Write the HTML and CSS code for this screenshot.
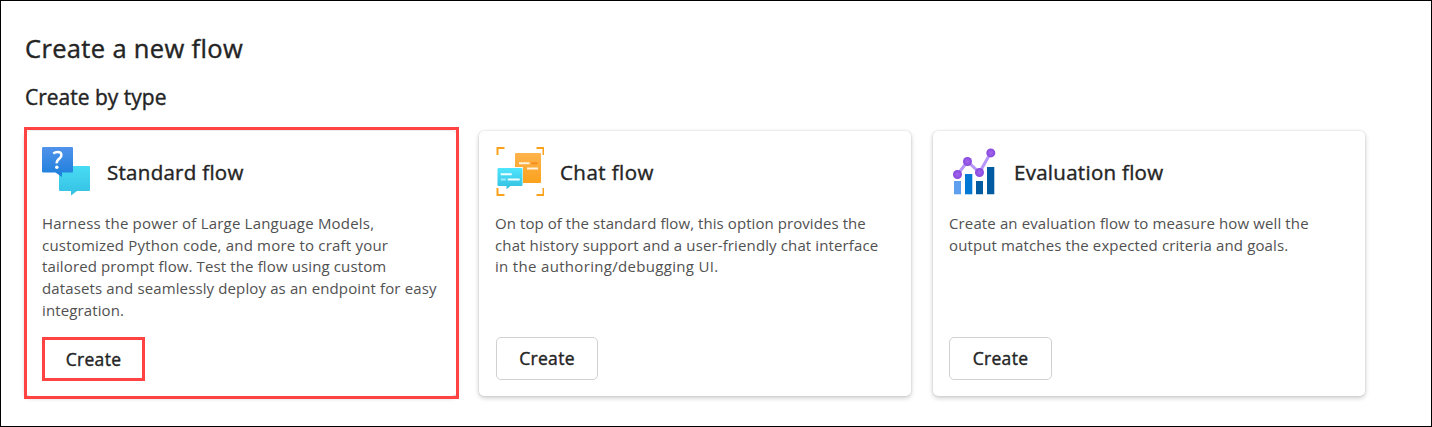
FILE: index.html
```html
<!DOCTYPE html>
<html lang="en">
<head>
<meta charset="utf-8">
<title>Create a new flow</title>
<link rel="stylesheet" href="styles.css">
</head>
<body>
<main class="page">
  <h1 class="title">Create a new flow</h1>
  <h2 class="subtitle">Create by type</h2>
  <div class="cards">
    <section class="card highlighted">
      <header class="card-head">
        <svg class="icon" viewBox="0 0 49 49">
          <defs>
            <linearGradient id="blue" x1="0" y1="0" x2="0" y2="1"><stop offset="0" stop-color="#5092ea"/><stop offset="1" stop-color="#1b7fdb"/></linearGradient>
            <linearGradient id="cyan" x1="0" y1="0" x2="0" y2="1"><stop offset="0" stop-color="#48dcf4"/><stop offset="1" stop-color="#35c0e3"/></linearGradient>
          </defs>
          <path fill="url(#cyan)" d="M18 19h29q1 0 1 1v23q0 1-1 1H35l-6 4.500v-4.500H18q-1 0-1-1V20q0-1 1-1z"/>
          <path fill="url(#blue)" d="M1.500 0h28.500q1 0 1 1v23.500q0 1-1 1H20v4.500l-6.500-4.500h-12q-1.500 0-1.500-1V1q0-1 1.500-1z"/>
          <path fill="none" stroke="#fff" stroke-width="2.500" d="M11.300 6.500q2-1.500 4.200-1.500c5 0 4.600 4.300 2.200 6.200-1.700 1.300-3.100 2.200-3 5.200"/>
          <circle cx="14.800" cy="20.200" r="1.750" fill="#fff"/>
        </svg>
        <h3 class="card-title">Standard flow</h3>
      </header>
      <p class="text"><span class="wide">Harness the power of Large Language Models,</span><br><span class="wide">customized Python code, and more to craft your</span><br>tailored prompt flow. Test the flow using custom<br>datasets and seamlessly deploy as an endpoint for easy<br>integration.</p>
      <button class="create">Create</button>
    </section>
    <section class="card chat">
      <header class="card-head">
        <svg class="icon" viewBox="0 0 49 49">
          <defs>
            <linearGradient id="orange" x1="0" y1="0" x2="0" y2="1"><stop offset="0" stop-color="#ffb34d"/><stop offset="1" stop-color="#faa21d"/></linearGradient>
            <linearGradient id="aqua" x1="0" y1="0" x2="0" y2="1"><stop offset="0" stop-color="#50e6ff"/><stop offset="1" stop-color="#32bedd"/></linearGradient>
          </defs>
          <path fill="none" stroke="#faa21d" stroke-width="2" d="M2.500 8V1h7M41.500 1h7v7M48.500 41v7h-7M9.500 48h-7v-7"/>
          <path fill="url(#orange)" d="M21 6h24q1 0 1 1v28q0 1-1 1H20V7q0-1 1-1z"/>
          <path stroke="#fff2df" stroke-width="2" d="M24 16.300h10.500M32 21.500h11"/>
          <path stroke="#f78d1e" stroke-width="2" d="M36.500 16.300h6"/>
          <path fill="#fff" d="M2.500 20H28v19H2.500z"/>
          <path fill="url(#aqua)" d="M3.500 21h23q1 0 1 1v16q0 1-1 1h-11l-4 3.300V39h-8q-1 0-1-1V22q0-1 1-1z"/>
          <path stroke="#f2feff" stroke-width="2" d="M5.700 27.300h11M12.700 32.500h12"/>
          <path stroke="#9cebff" stroke-width="2" d="M5.700 32.500h5"/>
        </svg>
        <h3 class="card-title">Chat flow</h3>
      </header>
      <p class="text"><span class="snug">On top of the standard flow, this option provides the</span><br>chat history support and a user-friendly chat interface<br><span class="wider">in the authoring/debugging UI.</span></p>
      <button class="create">Create</button>
    </section>
    <section class="card">
      <header class="card-head">
        <svg class="icon" viewBox="0 0 49 49">
          <defs>
            <radialGradient id="purple"><stop offset="0" stop-color="#a267ee"/><stop offset="1" stop-color="#8847dd"/></radialGradient>
          </defs>
          <path fill="#5ea0ef" d="M5 34h7v13.300H5z"/>
          <path fill="#0078d4" d="M16 27h7.300v20.300H16z"/>
          <path fill="#005ba1" d="M27 34h7v13.300h-7zM38 20h7.300v27.300H38z"/>
          <path fill="none" stroke="#b796f9" stroke-width="3" d="M8.500 27.500l10-13 12 11 11.300-20"/>
          <g fill="url(#purple)"><circle cx="8.500" cy="27.500" r="4.500"/><circle cx="18.500" cy="14.500" r="4.500"/><circle cx="30.500" cy="25.500" r="4.500"/><circle cx="41.800" cy="5.900" r="4.500"/></g>
        </svg>
        <h3 class="card-title">Evaluation flow</h3>
      </header>
      <p class="text">Create an evaluation flow to measure how well the<br>output matches the expected criteria and goals.</p>
      <button class="create">Create</button>
    </section>
  </div>
</main>
</body>
</html>
```
FILE: styles.css
```css
* { box-sizing: border-box; }
body {
  margin: 0;
  background: #fff;
  color: #242424;
  font-family: "Segoe UI", "Open Sans", "Noto Sans", sans-serif;
}
.page {
  width: 1432px;
  height: 427px;
  padding: 29px 23px 0 24px;
  border: 1px solid #000;
  overflow: hidden;
}
.title, .subtitle, .card-title { margin: 0; font-weight: 500; white-space: nowrap; -webkit-text-stroke: .4px #242424; }
.title { font-size: 25.500px; line-height: 36px; letter-spacing: .34px; }
.subtitle { margin-top: 15px; font-size: 21px; line-height: 32px; }
.cards {
  display: grid;
  grid-template-columns: repeat(3, 432px);
  column-gap: 22px;
  margin-top: 18px;
}
.card {
  position: relative;
  display: flex;
  flex-direction: column;
  align-items: flex-start;
  height: 265px;
  padding: 16px;
  border-radius: 5px;
  background: #fff;
  box-shadow: 0 0 2px rgba(0,0,0,.16), 0 2px 5px rgba(0,0,0,.2);
}
.highlighted { padding-left: 17px; }
.highlighted::after {
  content: "";
  position: absolute;
  inset: -4px -2px -3px -1px;
  border: 3px solid #ff4343;
  pointer-events: none;
}
.card-head { display: flex; align-items: center; gap: 16px; height: 49px; }
.icon { width: 49px; height: 49px; flex: none; }
.card-title { font-size: 20.500px; line-height: 30px; letter-spacing: .28px; }
.chat .card-title { letter-spacing: .45px; }
.text {
  margin: 17px 0 0;
  color: #515151;
  font-size: 15px;
  line-height: 21.700px;
  letter-spacing: .125px;
  white-space: nowrap;
}
.wide { letter-spacing: .2px; }
.wider { letter-spacing: .32px; }
.snug { letter-spacing: .07px; }
.create {
  width: 103px;
  height: 43px;
  margin-top: auto;
  padding: 0;
  border: 1px solid #d1d1d1;
  border-radius: 5px;
  background: #fff;
  color: #242424;
  font: 500 17.500px/41px "Segoe UI", "Open Sans", "Noto Sans", sans-serif;
  letter-spacing: .3px;
  -webkit-text-stroke: .4px #242424;
}
.chat .create { width: 102px; margin-left: 1px; }
.highlighted .create { height: 44px; margin-bottom: -1px; padding-bottom: 1px; border: 3px solid #ff4343; border-radius: 0; line-height: 36px; }
```
